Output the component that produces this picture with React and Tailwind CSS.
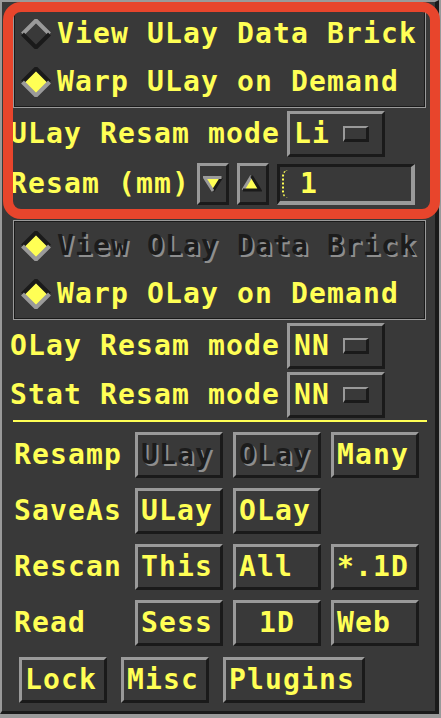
import React from "react";

const YEL = "#ffff55";
const FONT = "font-['DejaVu_Sans_Mono','Liberation_Mono',monospace] font-bold text-[28px] tracking-[1.14px] leading-none whitespace-pre";

function Diamond({ on }) {
  const top = on ? "#1a1a1a" : "#9a9a9a";
  const bot = on ? "#9a9a9a" : "#1a1a1a";
  return (
    <svg width="30" height="30" viewBox="0 0 30 30" className="shrink-0">
      <polygon points="15,1.5 28.5,15 15,28.5 1.5,15" fill={on ? YEL : "#393939"} />
      <polyline points="1.5,15 15,1.5 28.5,15" fill="none" stroke={top} strokeWidth="4" />
      <polyline points="28.5,15 15,28.5 1.5,15" fill="none" stroke={bot} strokeWidth="4" />
    </svg>
  );
}

function Radio({ on, dim, children }) {
  return (
    <div className="h-[48px] flex items-center pl-[6px]">
      <Diamond on={on} />
      <span
        className={`${FONT} ml-[6px] ${dim ? "text-[#1c1c1c] [text-shadow:2px_2px_0_#8e8e8e]" : "text-[#ffff55]"}`}
      >
        {children}
      </span>
    </div>
  );
}

function Frame({ children }) {
  return (
    <div className="ml-[11px] w-[413px] border border-[#9a9a9a]">
      <div className="border border-[#1a1a1a]">{children}</div>
    </div>
  );
}

function OptRow({ label, value }) {
  return (
    <div className="mt-[3px] h-[46px] flex items-center">
      <div className={`${FONT} w-[285px] pl-[8px] text-[#ffff55]`}>{label}</div>
      <div className="w-[98px] h-[46px] flex items-center justify-between pl-[4px] pr-[13px] border-[3px] border-t-[#9a9a9a] border-l-[#9a9a9a] border-b-[#1a1a1a] border-r-[#1a1a1a]">
        <span className={`${FONT} text-[#ffff55]`}>{value}</span>
        <div className="w-[26px] h-[16px] border-t-2 border-l-2 border-b-[3px] border-r-[3px] border-t-[#9a9a9a] border-l-[#9a9a9a] border-b-[#1a1a1a] border-r-[#1a1a1a]" />
      </div>
    </div>
  );
}

function Btn({ children, w = "w-[88px]", dim, center }) {
  return (
    <div
      className={`${w} h-[46px] shrink-0 flex items-center ${center ? "justify-center" : "pl-[3px]"} border-[3px] border-t-[#9a9a9a] border-l-[#9a9a9a] border-b-[#1a1a1a] border-r-[#1a1a1a]`}
    >
      <span className={`${FONT} ${dim ? "text-[#1c1c1c] [text-shadow:2px_2px_0_#8e8e8e]" : "text-[#ffff55]"}`}>
        {children}
      </span>
    </div>
  );
}

function ArrowBtn({ up }) {
  return (
    <div className="w-[32px] h-[42px] shrink-0 flex items-center justify-center border-[3px] border-t-[#9a9a9a] border-l-[#9a9a9a] border-b-[#1a1a1a] border-r-[#1a1a1a]">
      {up ? (
        <svg width="21" height="18" viewBox="0 0 21 18" className="-mt-[2px] -ml-[3px]">
          <polygon points="10.5,2 19,16 2,16" fill={YEL} />
          <line x1="2" y1="16" x2="10.5" y2="2" stroke="#9a9a9a" strokeWidth="3" />
          <polyline points="10.5,2 19,16 2,16" fill="none" stroke="#1a1a1a" strokeWidth="3" />
        </svg>
      ) : (
        <svg width="20" height="17" viewBox="0 0 20 17">
          <polygon points="1.5,1.5 18.5,1.5 10,15" fill={YEL} />
          <line x1="18.5" y1="1.5" x2="10" y2="15" stroke="#1a1a1a" strokeWidth="3" />
          <polyline points="18.5,1.5 1.5,1.5 10,15" fill="none" stroke="#9a9a9a" strokeWidth="3" />
        </svg>
      )}
    </div>
  );
}

function BtnRow({ label, children }) {
  return (
    <div className="h-[46px] flex items-center">
      <div className={`${FONT} w-[133px] shrink-0 pl-[12px] text-[#ffff55]`}>{label}</div>
      <div className="flex gap-[10px]">{children}</div>
    </div>
  );
}

export default function App() {
  return (
    <div className="relative w-[441px] h-[718px] bg-[#9a9a9a] overflow-hidden">
      <div className="w-[439px] h-[714px] bg-[#393939] border-t-2 border-l-2 border-r-4 border-b-[3px] border-t-[#9a9a9a] border-l-[#9a9a9a] border-r-[#1a1a1a] border-b-[#1a1a1a] flex flex-col">
        <div className="mt-[6px]">
          <Frame>
            <Radio>View ULay Data Brick</Radio>
            <Radio on>Warp ULay on Demand</Radio>
          </Frame>
        </div>

        <OptRow label="ULay Resam mode" value="Li" />

        <div className="mt-[6px] h-[42px] flex items-center">
          <div className={`${FONT} w-[195px] shrink-0 pl-[8px] text-[#ffff55]`}>Resam (mm)</div>
          <ArrowBtn />
          <div className="w-[8px]" />
          <ArrowBtn up />
          <div className="w-[8px]" />
          <div className="w-[138px] h-[41px] flex items-center border-t-[3px] border-l-[3px] border-b-4 border-r-4 border-t-[#1a1a1a] border-l-[#1a1a1a] border-b-[#9a9a9a] border-r-[#9a9a9a]">
            <div className="ml-[2px] h-[28px] w-[6px] border-l-2 border-dotted border-[#ffff55] rounded-l-[8px]" />
            <span className={`${FONT} ml-[12px] text-[#ffff55]`}>1</span>
          </div>
        </div>

        <div className="mt-[15px]">
          <Frame>
            <Radio on dim>View OLay Data Brick</Radio>
            <Radio on>Warp OLay on Demand</Radio>
          </Frame>
        </div>

        <OptRow label="OLay Resam mode" value="NN" />
        <OptRow label="Stat Resam mode" value="NN" />

        <div className="mt-[2px] ml-[11px] w-[414px] h-[2px] bg-[#ffff55]" />

        <div className="mt-[10px] flex flex-col gap-[10px]">
          <BtnRow label="Resamp">
            <Btn dim>ULay</Btn>
            <Btn dim>OLay</Btn>
            <Btn>Many</Btn>
          </BtnRow>
          <BtnRow label="SaveAs">
            <Btn>ULay</Btn>
            <Btn>OLay</Btn>
          </BtnRow>
          <BtnRow label="Rescan">
            <Btn>This</Btn>
            <Btn>All</Btn>
            <Btn>*.1D</Btn>
          </BtnRow>
          <BtnRow label="Read">
            <Btn>Sess</Btn>
            <Btn center>1D</Btn>
            <Btn>Web</Btn>
          </BtnRow>
        </div>

        <div className="mt-[11px] ml-[17px] flex gap-[14px]">
          <Btn>Lock</Btn>
          <Btn>Misc</Btn>
          <Btn w="w-[142px]">Plugins</Btn>
        </div>
      </div>

      <div className="absolute left-[3px] top-[2px] w-[437px] h-[217px] border-[10px] border-[#e8452c] rounded-[18px] pointer-events-none" />
    </div>
  );
}
